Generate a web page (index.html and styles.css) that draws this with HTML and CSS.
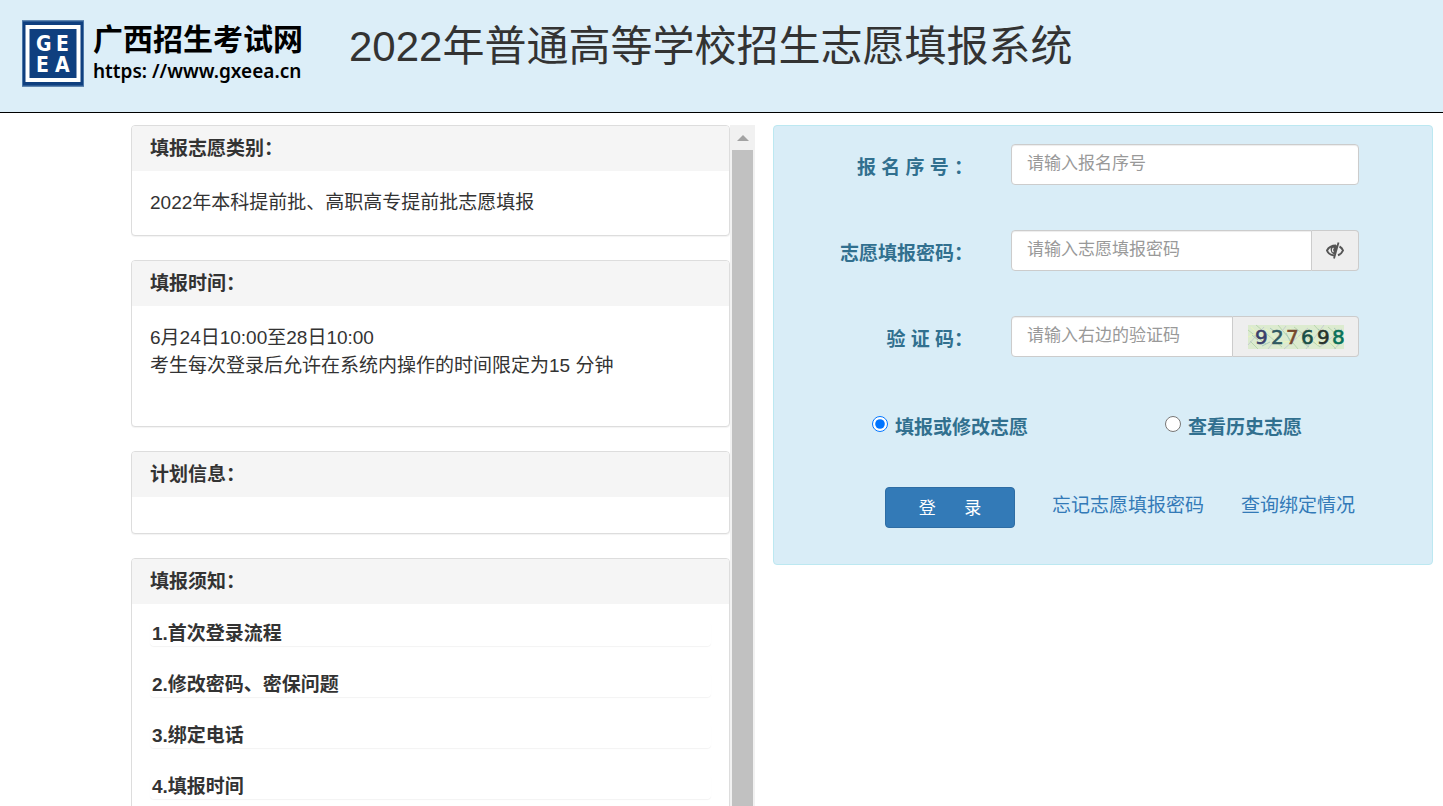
FILE: index.html
```html
<!DOCTYPE html>
<html lang="zh-CN">
<head>
<meta charset="utf-8">
<title>2022年普通高等学校招生志愿填报系统</title>
<link rel="stylesheet" href="styles.css">
</head>
<body>
<header class="top">
  <div class="brand">
    <svg class="brand-mark" viewBox="0 0 62 66" aria-hidden="true">
      <rect width="62" height="66" fill="#0f3f7f"/>
      <rect x="5.500" y="6.500" width="51" height="53" fill="none" stroke="#fff" stroke-width="4"/>
      <rect x="0.500" y="0.500" width="61" height="65" fill="none" stroke="#4a76a8" stroke-width="1"/>
      <text class="mark-text" x="14 34" y="30">GE</text>
      <text class="mark-text" x="14 33" y="51">EA</text>
    </svg>
    <div class="brand-text">
      <span class="brand-name">广西招生考试网</span>
      <span class="brand-url">https: //www.gxeea.cn</span>
    </div>
  </div>
  <h1 class="title">2022年普通高等学校招生志愿填报系统</h1>
</header>
<main class="main">
  <div class="info">
    <div class="info-list">
      <section class="panel">
        <h2 class="panel-head">填报志愿类别：</h2>
        <div class="panel-body">2022年本科提前批、高职高专提前批志愿填报</div>
      </section>
      <section class="panel">
        <h2 class="panel-head">填报时间：</h2>
        <div class="panel-body">6月24日10:00至28日10:00<br>考生每次登录后允许在系统内操作的时间限定为15 分钟<br>&nbsp;</div>
      </section>
      <section class="panel">
        <h2 class="panel-head">计划信息：</h2>
        <div class="panel-body"></div>
      </section>
      <section class="panel">
        <h2 class="panel-head">填报须知：</h2>
        <div class="panel-body notices">
          <h3 class="notice">1.首次登录流程</h3>
          <h3 class="notice">2.修改密码、密保问题</h3>
          <h3 class="notice">3.绑定电话</h3>
          <h3 class="notice">4.填报时间</h3>
        </div>
      </section>
    </div>
    <div class="scrollbar" aria-hidden="true"><span class="scroll-up"></span><span class="scroll-thumb"></span></div>
  </div>
  <form class="login">
    <div class="row">
      <label class="label" for="sn">报 名 序 号 ：</label>
      <div class="field"><input class="input" id="sn" type="text" placeholder="请输入报名序号"></div>
    </div>
    <div class="row">
      <label class="label" for="pw">志愿填报密码：</label>
      <div class="field">
        <input class="input" id="pw" type="password" placeholder="请输入志愿填报密码">
        <button class="addon eye" type="button" aria-label="显示密码">
          <svg class="eye-icon" viewBox="0 0 18 18" aria-hidden="true">
            <path d="M8 13.500C4.500 13 2 11 1 8.500C2.500 5.500 5.500 3.500 10 3.500" fill="none" stroke="#555" stroke-width="2"/>
            <path d="M5 4.500L12 3L9 12.500C5 12 4 8 5 4.500Z" fill="#555"/>
            <path d="M7.500 6a2.500 2.500 0 0 0 0 4" fill="none" stroke="#eee" stroke-width="1.200"/>
            <path d="M12.500 0.500L8 16.500" stroke="#555" stroke-width="1.800"/>
            <path d="M13.500 4.500C15.500 5.500 16.500 7 17 8.500C16 11 14 12.500 12 13.200" fill="none" stroke="#555" stroke-width="2"/>
          </svg>
        </button>
      </div>
    </div>
    <div class="row">
      <label class="label" for="code">验 证 码：</label>
      <div class="field">
        <input class="input" id="code" type="text" placeholder="请输入右边的验证码">
        <button class="addon captcha" type="button" aria-label="换一张验证码">
          <svg class="captcha-img" viewBox="0 0 96 24">
            <rect width="96" height="24" fill="#dcebcf"/>
            <g fill="none" stroke-width="1">
              <path stroke="#b9d6ae" d="M0 5l18 14M8 0l26 22M30 0l20 24M46 2l26 20M66 0l22 24M80 2l16 14M2 16l8 8"/>
              <path stroke="#c5cdd0" d="M0 20L16 2M20 24L38 1M36 24L60 3M58 24L76 0M72 22L94 4M86 24l10-9"/>
              <path stroke="#e9f6bd" d="M3 2l9 9M18 4l11 10M42 3l12 14M60 6l10 14M76 12l12 10M0 12l14-6M26 19l16-3"/>
              <path stroke="#a9c9bd" d="M4 10l6 5M22 3l5 4M38 8l4 8M54 17l7 5M70 4l6 5M86 3l7 6M14 21l8-4"/>
            </g>
            <text class="captcha-text" y="19" x="7 23 38 53 69 84"><tspan fill="#393f6b" stroke="#393f6b">9</tspan><tspan fill="#2f5961" stroke="#2f5961">2</tspan><tspan fill="#75482e" stroke="#75482e">7</tspan><tspan fill="#194f46" stroke="#194f46">6</tspan><tspan fill="#25322b" stroke="#25322b">9</tspan><tspan fill="#087159" stroke="#087159">8</tspan></text>
          </svg>
        </button>
      </div>
    </div>
    <div class="choices">
      <label class="choice"><input class="radio" type="radio" name="mode" checked><span class="choice-text">填报或修改志愿</span></label>
      <label class="choice"><input class="radio" type="radio" name="mode"><span class="choice-text">查看历史志愿</span></label>
    </div>
    <div class="actions">
      <button class="submit" type="button">登&nbsp;&nbsp;&nbsp;&nbsp;&nbsp;&nbsp;录</button>
      <a class="link" href="#">忘记志愿填报密码</a>
      <a class="link" href="#">查询绑定情况</a>
    </div>
  </form>
</main>
</body>
</html>
```
FILE: styles.css
```css
* { box-sizing: border-box; }

body {
  margin: 0;
  height: 100vh;
  overflow: hidden;
  display: flex;
  flex-direction: column;
  background: #fff;
  color: #333;
  font: 19px/28px "Liberation Sans", "Noto Sans CJK SC", sans-serif;
}

input, button { font-family: inherit; }

.top {
  flex: none;
  display: flex;
  align-items: flex-start;
  gap: 46px;
  padding: 20px 22px 25px;
  background: #dceef8;
  border-bottom: 1px solid #000;
}

.brand { display: flex; gap: 9px; }
.brand-mark { width: 62px; height: 67px; }
.mark-text { font: bold 21px "DejaVu Sans Condensed", "DejaVu Sans", sans-serif; fill: #fff; }
.brand-text { display: flex; flex-direction: column; color: #000; white-space: nowrap; }
.brand-name { font-size: 30px; line-height: 40px; font-weight: bold; }
.brand-url { font: 600 19px/22px "Noto Sans", sans-serif; }

.title {
  margin: 0;
  font-size: 42px;
  line-height: 54px;
  font-weight: normal;
  white-space: nowrap;
}

.main {
  flex: 1;
  min-height: 0;
  display: grid;
  grid-template-columns: 624fr 660fr;
  grid-template-rows: 100%;
  align-items: start;
  gap: 18px;
  padding: 12px 10px 0 131px;
}

.info { display: flex; height: 100%; }
.info-list { flex: 1; overflow: hidden; }

.panel {
  margin-bottom: 24px;
  background: #fff;
  border: 1px solid #ddd;
  border-radius: 4px;
  box-shadow: 0 1px 1px rgba(0, 0, 0, .05);
}
.panel-head {
  margin: 0;
  padding: 9px 18px 8px;
  font-size: 19px;
  line-height: 28px;
  background: #f5f5f5;
  border-radius: 3px 3px 0 0;
}
.panel-body { padding: 18px; }
.notice {
  margin: 0 0 27px;
  padding: 0 2px;
  font-size: 19px;
  line-height: 24px;
  border-radius: 4px;
  box-shadow: 0 1px 1px rgba(0, 0, 0, .05);
}

.scrollbar {
  width: 25px;
  display: flex;
  flex-direction: column;
  align-items: center;
  background: #f1f1f1;
}
.scroll-up {
  margin: 10px 0 9px;
  border: 6px solid transparent;
  border-top: 0;
  border-bottom-color: #a3a3a3;
}
.scroll-thumb { flex: 1; width: 21px; background: #c1c1c1; }

.login {
  padding: 18px 73px 36px 0;
  background: #d9edf7;
  border: 1px solid #bce8f1;
  border-radius: 4px;
}
.row {
  display: grid;
  grid-template-columns: minmax(0, 199fr) minmax(0, 348fr);
  gap: 38px;
  margin-bottom: 45px;
}
.label {
  padding-top: 10px;
  text-align: right;
  color: #31708f;
  font-weight: bold;
  white-space: nowrap;
}
.field { display: flex; height: 41px; }
.input {
  flex: 1;
  width: 100%;
  min-width: 0;
  padding: 0 15px 1px;
  font-size: 17px;
  color: #555;
  background: #fff;
  border: 1px solid #ccc;
  border-radius: 4px;
  box-shadow: inset 0 1px 1px rgba(0, 0, 0, .075);
}
.input::placeholder { color: #999; opacity: 1; }
.input:not(:last-child) { border-radius: 4px 0 0 4px; }
.addon {
  flex: none;
  display: flex;
  align-items: center;
  justify-content: center;
  padding: 0;
  background: #eee;
  border: 1px solid #ccc;
  border-left: 0;
  border-radius: 0 4px 4px 0;
}
.eye { width: 47px; }
.eye-icon { width: 18px; height: 18px; }
.captcha { width: 126px; }
.captcha-img { width: 96px; height: 24px; overflow: visible; }
.captcha-text { font: 20px "DejaVu Sans", sans-serif; stroke-width: 0.600; }

.choices {
  display: grid;
  grid-template-columns: 293px 1fr;
  padding: 10px 0 0 98px;
  margin-bottom: 45px;
  color: #31708f;
  font-weight: bold;
}
.choice { display: flex; gap: 7px; }
.choice-text { padding-top: 2px; }
.radio { width: 16px; height: 16px; margin: 4px 0 0; }

.actions { display: flex; gap: 37px; padding-left: 111px; white-space: nowrap; }
.submit {
  width: 130px;
  height: 41px;
  padding: 0 0 2px;
  font-size: 17px;
  color: #fff;
  background: #337ab7;
  border: 1px solid #2e6da4;
  border-radius: 4px;
}
.link { padding-top: 5px; color: #337ab7; text-decoration: none; }
```
